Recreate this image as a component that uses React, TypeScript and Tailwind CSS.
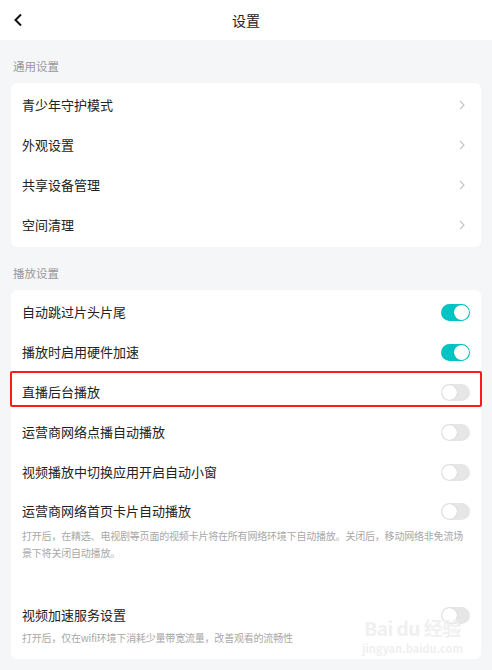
import React from "react";

type Row = { label: string; on?: boolean; marked?: boolean };

const generalRows = ["青少年守护模式", "外观设置", "共享设备管理", "空间清理"];

const playRows: Row[] = [
  { label: "自动跳过片头片尾", on: true },
  { label: "播放时启用硬件加速", on: true },
  { label: "直播后台播放", marked: true },
  { label: "运营商网络点播自动播放" },
  { label: "视频播放中切换应用开启自动小窗" },
];

const Toggle: React.FC<{ on?: boolean }> = ({ on }) => (
  <div
    className={`flex h-[17px] w-[29px] shrink-0 items-center rounded-full px-px ${
      on ? "justify-end bg-[#00c4c4]" : "justify-start bg-[#e6e6e6]"
    }`}
  >
    <div className="h-[15px] w-[15px] rounded-full bg-white shadow-[0_0_1px_rgba(0,0,0,0.25)]" />
  </div>
);

const Chevron = () => (
  <svg width="6" height="10" viewBox="0 0 6 10" className="shrink-0">
    <polyline points="1,1 5,5 1,9" fill="none" stroke="#c2c2c2" strokeWidth="1.1" />
  </svg>
);

const SectionLabel: React.FC<{ text: string }> = ({ text }) => (
  <div className="px-[13px] pt-[18px] pb-[9px] text-[11.5px] leading-4 text-[#999]">{text}</div>
);

export default function App() {
  return (
    <div className="min-h-[670px] w-[492px] bg-[#f5f6f8] font-['Noto_Sans_CJK_SC','Noto_Sans',sans-serif] text-[#222]">
      <div className="relative flex h-10 items-center justify-center bg-white">
        <svg width="10" height="14" viewBox="0 0 10 14" className="absolute left-[13px] top-[13px]">
          <polyline points="8,1.5 2.5,7 8,12.5" fill="none" stroke="#111" strokeWidth="2" />
        </svg>
        <span className="text-[14px]">设置</span>
      </div>

      <SectionLabel text="通用设置" />
      <div className="mx-[11px] rounded-md bg-white py-[2px]">
        {generalRows.map((r) => (
          <div key={r} className="flex h-10 items-center justify-between pl-[11px] pr-[16px] text-[13px]">
            <span>{r}</span>
            <Chevron />
          </div>
        ))}
      </div>

      <SectionLabel text="播放设置" />
      <div className="relative mx-[11px] rounded-md bg-white pt-[2px] pb-[13px]">
        {playRows.map((r) => (
          <div key={r.label} className="relative flex h-10 items-center justify-between px-[11px] text-[13px]">
            <span>{r.label}</span>
            <Toggle on={r.on} />
            {r.marked && (
              <div className="pointer-events-none absolute left-[-1px] right-[-1px] top-[-1px] h-[36px] rounded-[2px] border-[2.5px] border-[#ff1a1a]" />
            )}
          </div>
        ))}

        <div className="px-[11px] pt-[9px]">
          <div className="flex h-5 items-center justify-between text-[13px]">
            <span>运营商网络首页卡片自动播放</span>
            <Toggle />
          </div>
          <p className="mt-[6px] w-fit whitespace-nowrap text-[10px] leading-[17px] tracking-[-0.2px] text-[#a8a8a8]">
            打开后，在精选、电视剧等页面的视频卡片将在所有网络环境下自动播放。关闭后，移动网络非免流场
            <br />
            景下将关闭自动播放。
          </p>
        </div>

        <div className="px-[11px] pt-[44px]">
          <div className="flex h-5 items-center justify-between text-[13px]">
            <span>视频加速服务设置</span>
            <Toggle />
          </div>
          <p className="mt-[4px] w-fit text-[10px] leading-[17px] tracking-[-0.2px] text-[#a8a8a8]">
            打开后，仅在wifi环境下消耗少量带宽流量，改善观看的流畅性
          </p>
        </div>

        <div className="pointer-events-none absolute right-[18px] bottom-[3px] flex flex-col items-center text-[#f0f0f0]">
          <span className="text-[19px] font-bold leading-6 tracking-tight">Bai du 经验</span>
          <span className="text-[11px] font-bold leading-4">jingyan.baidu.com</span>
        </div>
      </div>
    </div>
  );
}
